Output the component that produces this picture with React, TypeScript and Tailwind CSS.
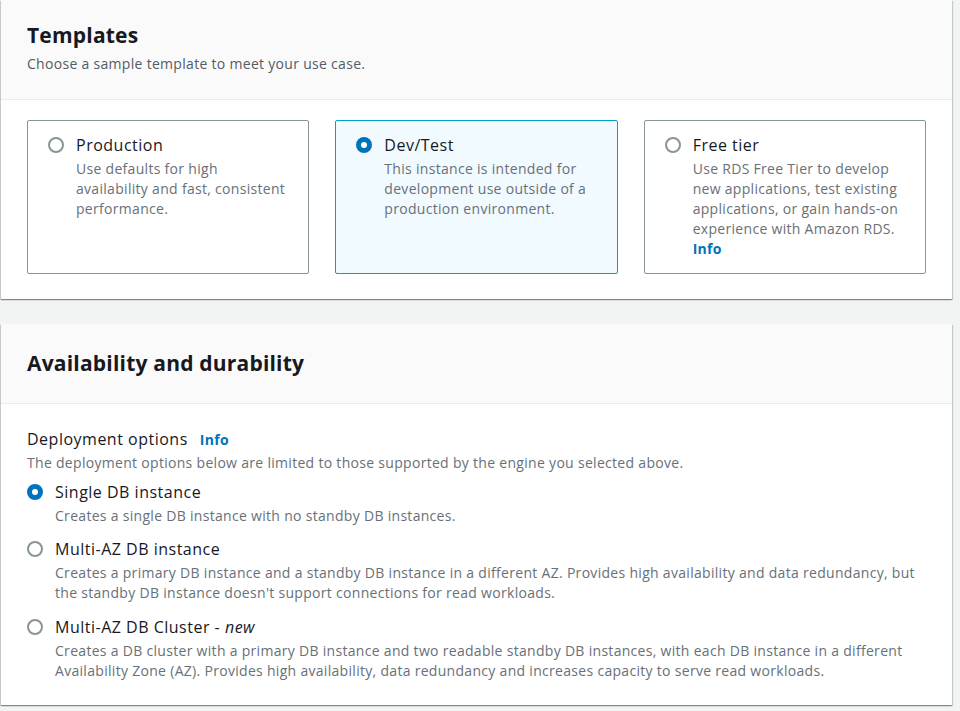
import React from "react";

const font = { fontFamily: '"Open Sans", "Noto Sans", Arial, sans-serif' };

function Radio({ checked }: { checked: boolean }) {
  return checked ? (
    <span className="mt-[3px] box-border inline-block h-[16px] w-[16px] shrink-0 rounded-full border-[5px] border-[#0073bb] bg-white" />
  ) : (
    <span className="mt-[3px] box-border inline-block h-[16px] w-[16px] shrink-0 rounded-full border-[2px] border-[#879596] bg-white" />
  );
}

function Tile({
  title,
  desc,
  checked,
  info,
}: {
  title: string;
  desc: string;
  checked: boolean;
  info?: boolean;
}) {
  return (
    <div
      className={
        "flex gap-3 rounded-[2px] border pb-[14px] pl-[20px] pr-[18px] pt-[13px] " +
        (checked ? "border-[#00a1c9] bg-[#f1faff]" : "border-[#879596] bg-white")
      }
    >
      <Radio checked={checked} />
      <div className="min-w-0">
        <div className="text-[16px] leading-[22px] tracking-[0.5px] text-[#16191f]">{title}</div>
        <div className="mt-[3px] text-[14px] leading-[20px] tracking-[0.3px] text-[#687078]">
          {desc}
          {info && <div className="font-bold text-[#0073bb]">Info</div>}
        </div>
      </div>
    </div>
  );
}

function Option({
  checked,
  title,
  desc,
}: {
  checked: boolean;
  title: React.ReactNode;
  desc: string;
}) {
  return (
    <div className="flex gap-3">
      <Radio checked={checked} />
      <div>
        <div className="text-[16px] leading-[22px] tracking-[0.5px] text-[#16191f]">{title}</div>
        <div className="mt-[3px] text-[14px] leading-[20px] tracking-[0.3px] text-[#687078]">{desc}</div>
      </div>
    </div>
  );
}

const cardShadow =
  "shadow-[0_1px_1px_0_rgba(0,28,36,0.3),1px_1px_1px_0_rgba(0,28,36,0.15),-1px_1px_1px_0_rgba(0,28,36,0.15)]";

export default function App() {
  return (
    <div className="min-h-[711px] w-[960px] bg-[#f2f3f3] pl-[1px]" style={font}>
      <div className={"w-[951px] bg-white " + cardShadow}>
        <div className="border-b border-[#eaeded] bg-[#fafafa] px-[26px] pb-[25px] pt-[21px]">
          <h2 className="text-[21px] font-bold leading-[28px] tracking-[0.2px] text-[#16191f]">Templates</h2>
          <p className="mt-[5px] text-[14px] leading-[20px] tracking-[0.3px] text-[#545b64]">
            Choose a sample template to meet your use case.
          </p>
        </div>
        <div className="px-[26px] pb-[25px] pt-[20px]">
          <div className="grid grid-cols-3 gap-[26px]">
            <Tile
              checked={false}
              title="Production"
              desc="Use defaults for high availability and fast, consistent performance."
            />
            <Tile
              checked={true}
              title="Dev/Test"
              desc="This instance is intended for development use outside of a production environment."
            />
            <Tile
              checked={false}
              title="Free tier"
              desc="Use RDS Free Tier to develop new applications, test existing applications, or gain hands-on experience with Amazon RDS."
              info
            />
          </div>
        </div>
      </div>

      <div className={"mt-[25px] w-[951px] bg-white " + cardShadow}>
        <div className="border-b border-[#eaeded] bg-[#fafafa] px-[26px] pb-[26px] pt-[25px]">
          <h2 className="text-[21px] font-bold leading-[28px] tracking-[0.2px] text-[#16191f]">
            Availability and durability
          </h2>
        </div>
        <div className="px-[26px] pb-[24px] pt-[24px]">
          <div className="flex items-baseline gap-3">
            <span className="text-[16px] leading-[22px] tracking-[0.5px] text-[#16191f]">Deployment options</span>
            <span className="text-[14px] font-bold tracking-[0.3px] text-[#0073bb]">Info</span>
          </div>
          <p className="mt-[3px] text-[14px] leading-[20px] tracking-[0.3px] text-[#687078]">
            The deployment options below are limited to those supported by the engine you selected above.
          </p>
          <div className="mt-[8px] flex flex-col">
            <Option
              checked={true}
              title="Single DB instance"
              desc="Creates a single DB instance with no standby DB instances."
            />
            <div className="mt-[12px]">
              <Option
                checked={false}
                title="Multi-AZ DB instance"
                desc="Creates a primary DB instance and a standby DB instance in a different AZ. Provides high availability and data redundancy, but the standby DB instance doesn't support connections for read workloads."
              />
            </div>
            <div className="mt-[13px]">
              <Option
                checked={false}
                title={
                  <>
                    Multi-AZ DB Cluster - <i>new</i>
                  </>
                }
                desc="Creates a DB cluster with a primary DB instance and two readable standby DB instances, with each DB instance in a different Availability Zone (AZ). Provides high availability, data redundancy and increases capacity to serve read workloads."
              />
            </div>
          </div>
        </div>
      </div>
    </div>
  );
}
